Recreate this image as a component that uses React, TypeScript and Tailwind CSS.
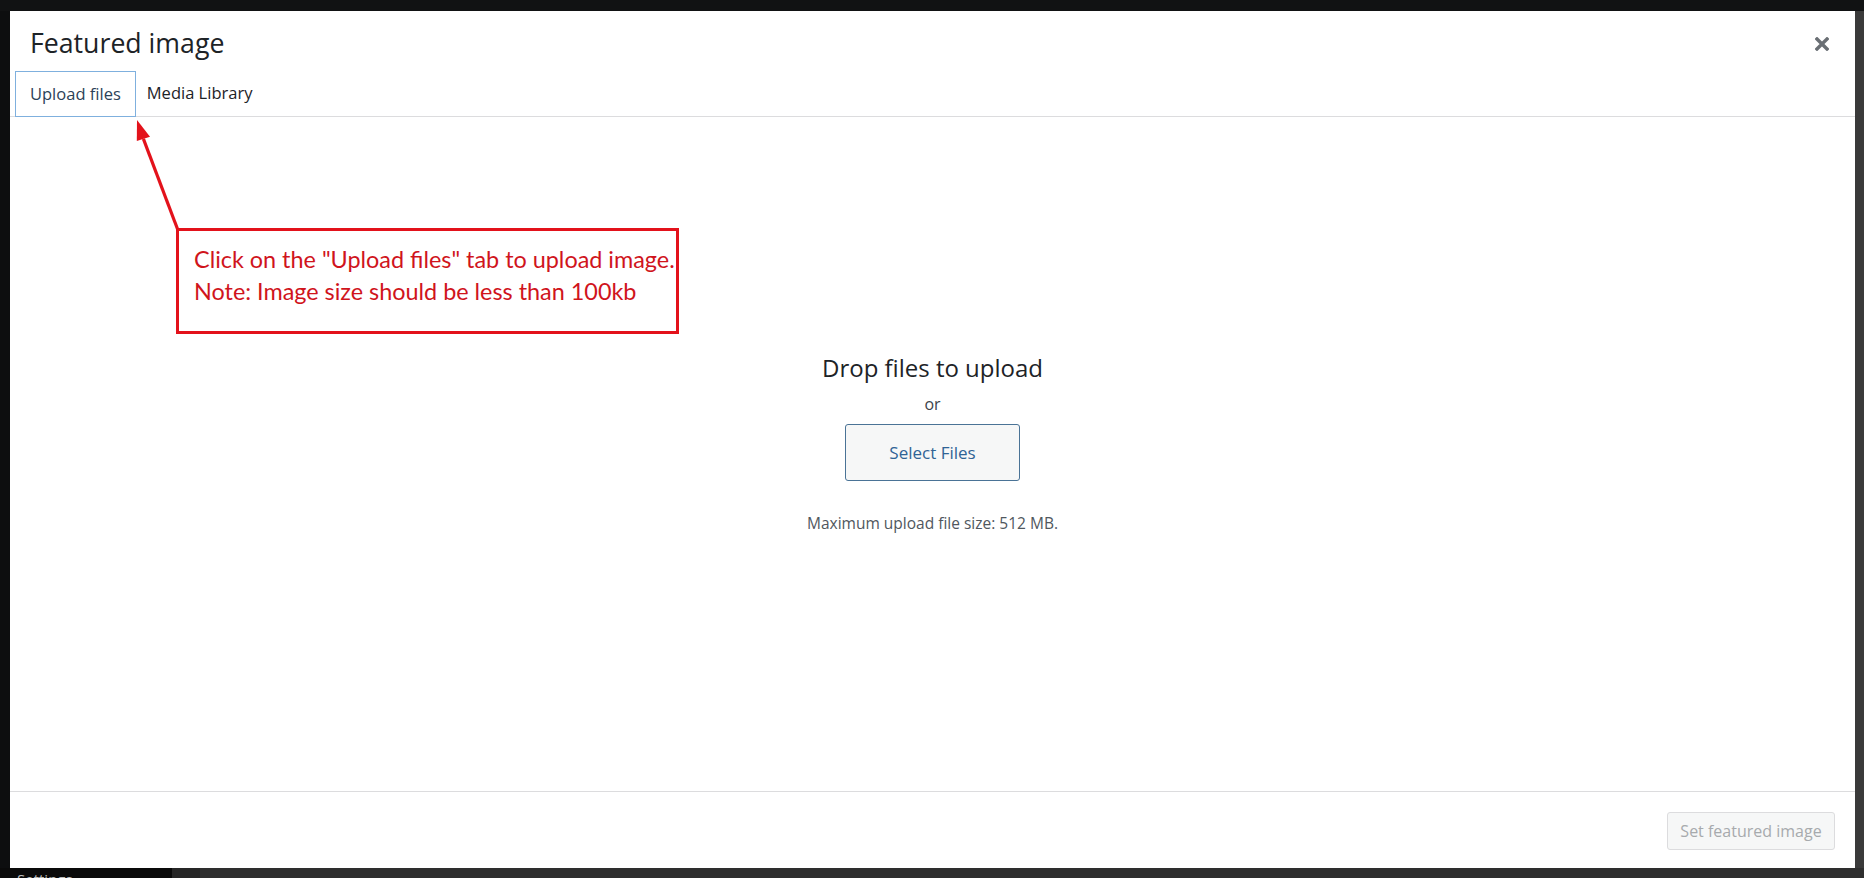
import React from "react";

export default function App() {
  return (
    <div
      className="relative w-[1864px] h-[878px] overflow-hidden bg-[#0f1011] flex flex-col"
      style={{ fontFamily: '"Open Sans", "Noto Sans", sans-serif' }}
    >
      {/* top backdrop strip */}
      <div className="h-[11px] shrink-0 bg-[#111213]" />
      <div className="flex h-[857px] shrink-0">
        <div className="w-[10px] shrink-0 bg-[#0d0e0f]" />
        {/* modal */}
        <div className="w-[1845px] shrink-0 bg-white flex flex-col">
          {/* header */}
          <div className="flex items-start justify-between pl-[20px] pr-[26px]">
            <h1 className="pt-[16px] text-[26.7px] leading-[31px] text-[#1d2327] font-normal">
              Featured image
            </h1>
            <button className="mt-[26px] w-[14px] h-[14px] flex items-center justify-center">
              <svg width="14" height="14" viewBox="0 0 14 14">
                <path d="M2 2 L12 12 M12 2 L2 12" stroke="#6a6f74" strokeWidth="3.4" strokeLinecap="square" />
              </svg>
            </button>
          </div>
          {/* tabs */}
          <div className="mt-[13px] flex items-stretch h-[46px] border-b border-[#dcdcde] pl-[5px]">
            <div className="h-[46px] -mb-px px-[14px] flex items-center border border-[#7fb0de] text-[16.5px] text-[#2c4258]">
              Upload files
            </div>
            <div className="px-[11px] flex items-center text-[16.5px] text-[#1d2327]">
              Media Library
            </div>
          </div>
          {/* content */}
          <div className="flex-1 flex flex-col items-center pt-[236px]">
            <div className="text-[24px] leading-[29px] text-[#1d2327]">Drop files to upload</div>
            <div className="mt-[10px] text-[16px] leading-[24px] text-[#3c434a]">or</div>
            <button className="mt-[8px] w-[175px] h-[57px] rounded-[3px] border border-[#4a7396] bg-[#f6f7f7] text-[17px] text-[#2f6395]">
              Select Files
            </button>
            <div className="mt-[31px] text-[15.5px] leading-[22px] text-[#50575e]">
              Maximum upload file size: 512 MB.
            </div>
          </div>
          {/* footer */}
          <div className="h-[77px] shrink-0 border-t border-[#dcdcde] flex items-start justify-end pr-[20px] pt-[20px]">
            <button className="w-[168px] h-[38px] rounded-[3px] border border-[#dcdcde] bg-[#f6f7f7] text-[16px] text-[#a7aaad]">
              Set featured image
            </button>
          </div>
        </div>
        <div className="flex-1 bg-[#3a3a3a]" />
      </div>
      {/* bottom backdrop strip */}
      <div className="flex-1 flex">
        <div className="w-[172px] bg-[#0a0a0a] pl-[17px] overflow-hidden">
          <div className="text-[15px] leading-[22px] text-[#bcbcbc]">Settings</div>
        </div>
        <div className="w-[28px] bg-[#262626]" />
        <div className="flex-1 bg-[#2e2e2e]" />
      </div>

      {/* annotation arrow */}
      <svg className="absolute left-[120px] top-[110px]" width="70" height="125" viewBox="0 0 70 125">
        <line x1="23.4" y1="28.9" x2="57.5" y2="119" stroke="#e3121b" strokeWidth="3.2" />
        <polygon points="17,10 16.8,31.1 30,26.7" fill="#e3121b" />
      </svg>
      {/* annotation box */}
      <div
        className="absolute left-[176px] top-[228px] w-[503px] h-[106px] border-[3px] border-[#e3121b] bg-white pl-[15px] pt-[12px]"
        style={{ fontFamily: 'Lato, "Open Sans", sans-serif' }}
      >
        <div className="text-[23.4px] leading-[32px] text-[#d0141c] whitespace-nowrap">
          Click on the "Upload files" tab to upload image.
          <br />
          Note: Image size should be less than 100kb
        </div>
      </div>
    </div>
  );
}
